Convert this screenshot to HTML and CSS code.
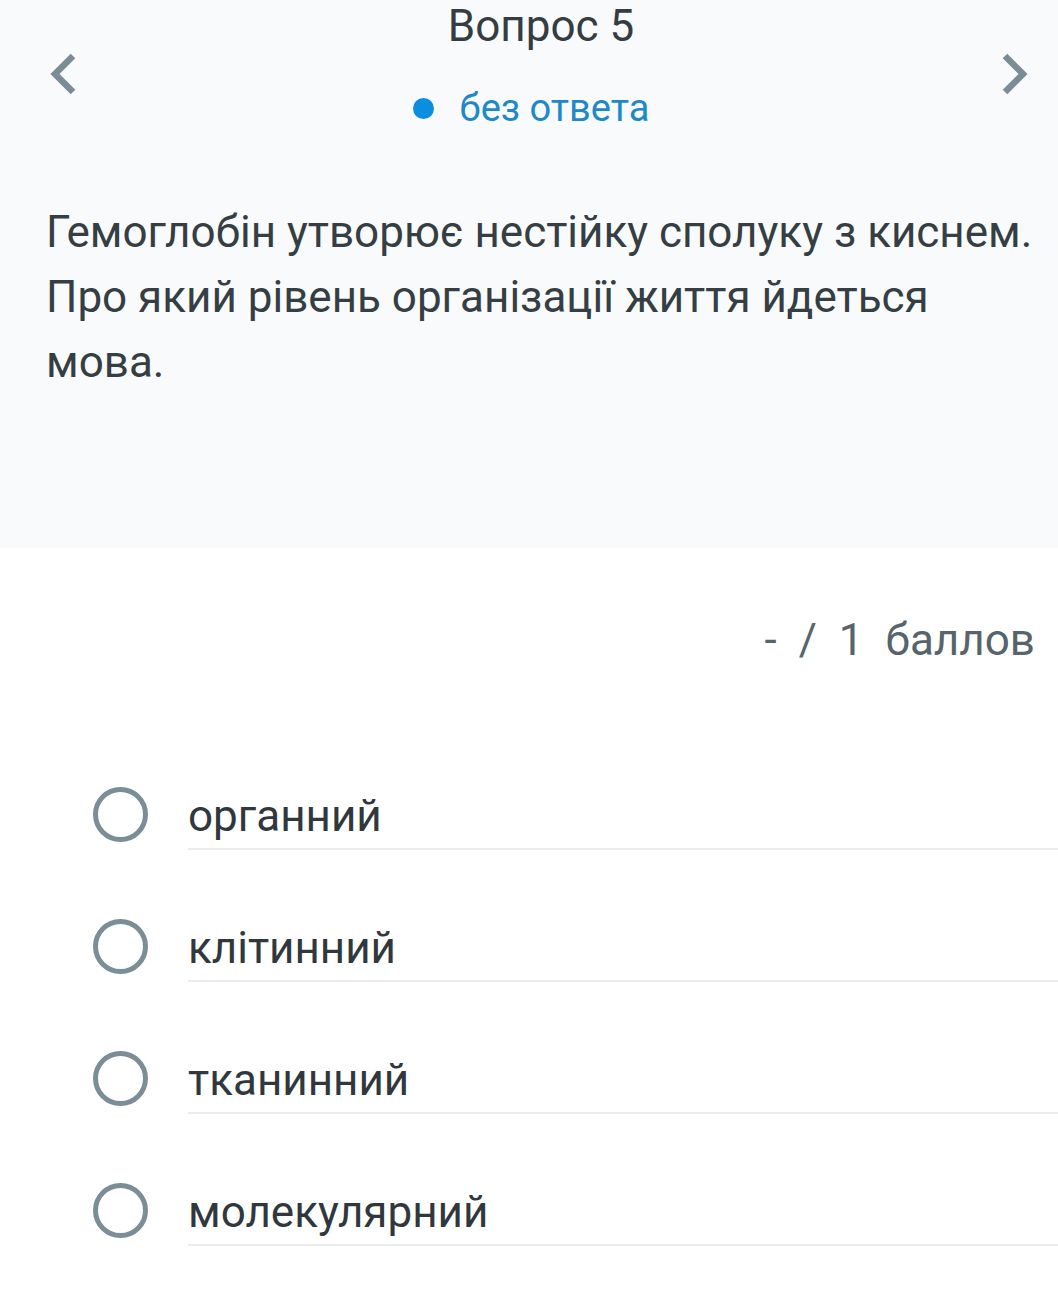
FILE: index.html
```html
<!DOCTYPE html>
<html lang="uk">
<head>
<meta charset="utf-8">
<title>Вопрос 5</title>
<link rel="stylesheet" href="styles.css">
</head>
<body>
<header class="head">
  <div class="nav">
    <button class="chev chev-left" aria-label="Назад">
      <svg viewBox="0 0 30 44" width="30" height="44"><polyline points="25,3 7,21 25,39" fill="none" stroke="#7a8d97" stroke-width="6.5" stroke-linecap="butt" stroke-linejoin="miter"/></svg>
    </button>
    <div class="center">
      <div class="title">Вопрос 5</div>
      <div class="status"><span class="dot"></span><span class="status-text">без ответа</span></div>
    </div>
    <button class="chev chev-right" aria-label="Вперед">
      <svg viewBox="0 0 30 44" width="30" height="44"><polyline points="5,3 23,21 5,39" fill="none" stroke="#7a8d97" stroke-width="6.5" stroke-linecap="butt" stroke-linejoin="miter"/></svg>
    </button>
  </div>
  <p class="question">Гемоглобін утворює нестійку сполуку з киснем. Про який рівень організації життя йдеться мова.</p>
</header>
<main class="body">
  <div class="score"><span>-</span><span>/</span><span>1</span><span>баллов</span></div>
  <ul class="options">
    <li class="option"><span class="radio"></span><span class="label">органний</span></li>
    <li class="option"><span class="radio"></span><span class="label">клітинний</span></li>
    <li class="option"><span class="radio"></span><span class="label">тканинний</span></li>
    <li class="option"><span class="radio"></span><span class="label">молекулярний</span></li>
  </ul>
</main>
</body>
</html>
```
FILE: styles.css
```css
html, body {
  margin: 0;
  padding: 0;
  background: #ffffff;
  font-family: Roboto, "Noto Sans", "Liberation Sans", sans-serif;
}

.head {
  background: #f8fafc;
  height: 548px;
  box-sizing: border-box;
}

.nav {
  display: flex;
  justify-content: space-between;
  align-items: flex-start;
}

.chev {
  background: none;
  border: 0;
  padding: 0;
  margin-top: 53px;
  width: 30px;
  height: 44px;
  display: block;
}
.chev svg { display: block; }
.chev-left { margin-left: 48px; }
.chev-right { margin-right: 28px; }

.center {
  display: flex;
  flex-direction: column;
  align-items: center;
}

.title {
  font-size: 44px;
  line-height: 52px;
  color: #353d42;
  margin-left: 4px;
}

.status {
  margin-top: 32px;
  display: flex;
  align-items: center;
  gap: 26px;
  margin-right: 16px;
}

.dot {
  width: 21px;
  height: 21px;
  border-radius: 50%;
  background: #0b8de0;
}

.status-text {
  font-size: 38px;
  line-height: 48px;
  color: #1f88c6;
}

.question {
  margin: 68px 0 0 0;
  padding: 0 12px 0 46px;
  font-size: 44px;
  line-height: 65px;
  color: #353e43;
}

.body {
  padding-top: 66px;
}

.score {
  display: flex;
  justify-content: flex-end;
  gap: 22px;
  padding-right: 23px;
  font-size: 44px;
  line-height: 52px;
  color: #56646b;
}

.options {
  list-style: none;
  margin: 121px 0 0 0;
  padding: 0;
  display: flex;
  flex-direction: column;
  gap: 69px;
}

.option {
  display: flex;
  align-items: flex-start;
}

.radio {
  flex: none;
  width: 55px;
  height: 55px;
  box-sizing: border-box;
  border: 5px solid #7b8e98;
  border-radius: 50%;
  margin-left: 93px;
}

.label {
  flex: 1;
  margin-left: 40px;
  margin-top: 3px;
  font-size: 44px;
  line-height: 52px;
  padding-bottom: 6px;
  border-bottom: 2px solid #ececec;
  color: #30383d;
}
```
